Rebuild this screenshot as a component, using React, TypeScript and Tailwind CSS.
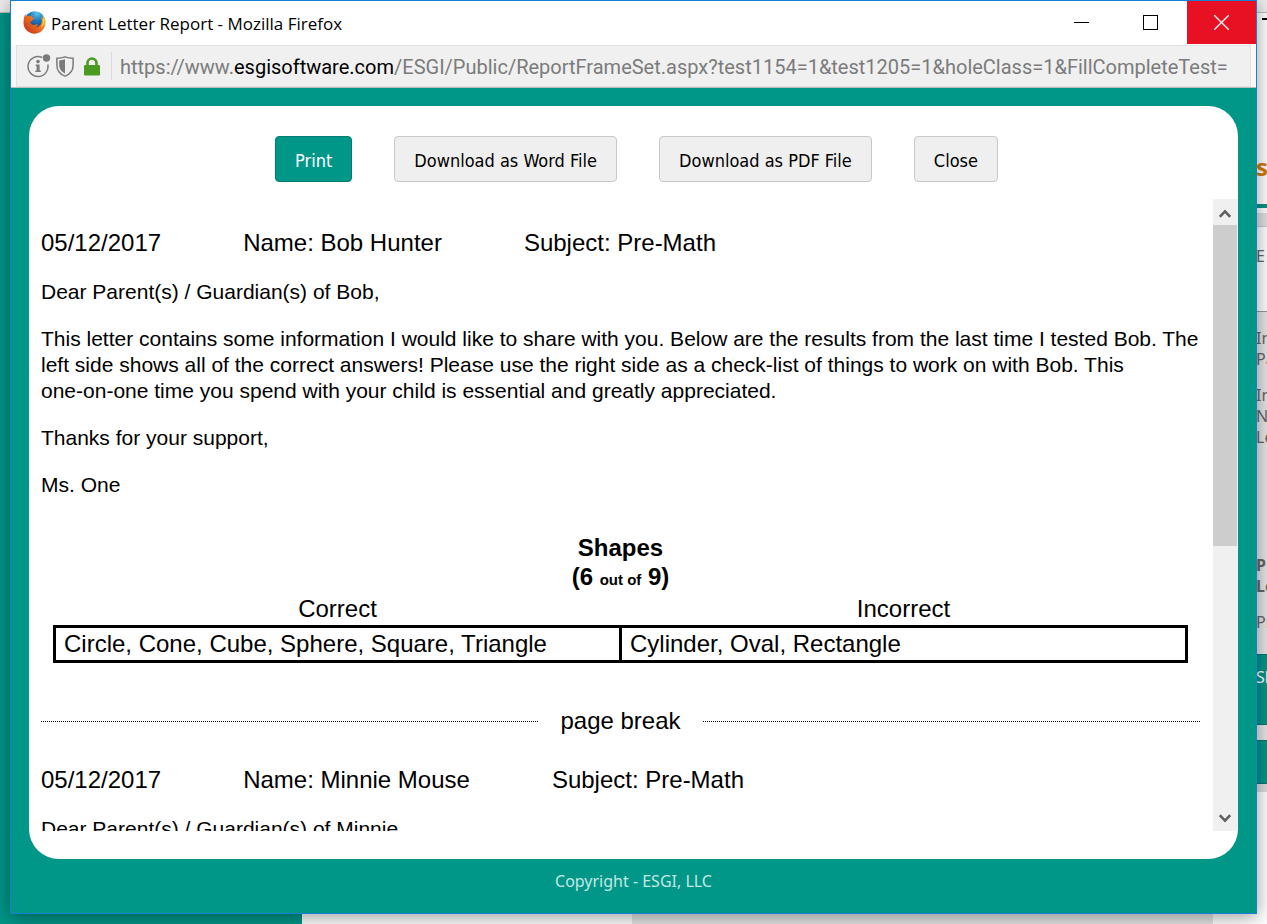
import { useRef } from "react";

function FirefoxLogo() {
  return (
    <svg className="size-[23px] shrink-0" viewBox="0 0 23 23" aria-hidden="true">
      <defs>
        <radialGradient id="globe" cx="0.6" cy="0.1" r="0.9">
          <stop offset="0" stopColor="#5cc4ee" />
          <stop offset="0.4" stopColor="#2078ba" />
          <stop offset="1" stopColor="#10256b" />
        </radialGradient>
        <linearGradient id="fox" x1="1" y1="0.1" x2="0.1" y2="0.9">
          <stop offset="0" stopColor="#ffdf3c" />
          <stop offset="0.4" stopColor="#f07a20" />
          <stop offset="1" stopColor="#c9341c" />
        </linearGradient>
      </defs>
      <circle cx="11.800" cy="10.600" r="10.400" fill="url(#globe)" />
      <path
        d="M2.200 3C2.400 3.900 2.800 4.500 3.400 5c1.500-.5 3-.3 4.100.4.700-.9 1.500-1.300 2.500-1.500-.9.8-1.300 1.700-1.200 2.500.8.300 1.900.2 2.700.4.100.8-.4 1.300-1.500 1.800-.6.300-.8.800-.8 1.700-.8-.2-1.500-.1-2.200.4.500 2.200 2.200 3.500 4.300 3.300 1.500-.2 2.200-1 3.300-.6.500.3.400.9-.1 1.300-1 .9-2 1.300-3.200 1.400 4 .8 7.400-2.100 7.600-6 .1-1.600-.2-3-.9-4.100 1 .6 1.600 1.400 2 2.400.1-2-.4-3.500-1.300-4.900 2.600 2.100 4 5 3.800 8.500-.4 6-5.100 10.700-11 10.700C5.500 22.500.6 18 .5 12 .4 8.700 1.200 5.500 2.200 3Z"
        fill="url(#fox)"
      />
      <path d="M20.600 5.500c1.300 4.200.6 9-3 11.700 2-3 2.800-7.200 3-11.700Z" fill="#ffd23c" />
    </svg>
  );
}

function InfoIcon() {
  return (
    <svg className="size-[24px] shrink-0" viewBox="0 0 24 24" aria-hidden="true">
      <path d="M15.200 3.500A10 10 0 1 0 20.800 10.500" fill="none" stroke="#7b7b7b" strokeWidth="1.500" />
      <circle cx="19.500" cy="4" r="3.700" fill="#7b7b7b" />
      <circle cx="11" cy="7.600" r="1.800" fill="#7b7b7b" />
      <path d="M8.700 10.500h3.900v6h1.200v1.500H8.400v-1.500h1.200V12H8.700Z" fill="#7b7b7b" />
    </svg>
  );
}

function ShieldIcon() {
  return (
    <svg className="h-[21px] w-[18px] shrink-0" viewBox="0 0 18 21" aria-hidden="true">
      <path
        d="M9 .9C6.500 1.900 3.500 2.300.9 2.300V9c0 5.500 3.500 9.500 8.100 11.100C13.600 18.500 17.100 14.500 17.100 9V2.300C14.500 2.300 11.500 1.900 9 .9Z"
        fill="none"
        stroke="#7b7b7b"
        strokeWidth="1.500"
      />
      <path d="M9 3.300C7 4 5 4.300 3.200 4.400V9c0 4 2.400 7 5.800 8.500Z" fill="#7b7b7b" />
    </svg>
  );
}

function LockIcon() {
  return (
    <svg className="h-[19px] w-[16px] shrink-0" viewBox="0 0 16 19" aria-hidden="true">
      <path d="M3.500 9V6a4.500 4.500 0 0 1 9 0v3" fill="none" stroke="#4b9b23" strokeWidth="2.600" />
      <rect x="0" y="8" width="16" height="10.500" rx="1.200" fill="#4b9b23" />
    </svg>
  );
}

function BackgroundPage() {
  return (
    <div className="flex h-full flex-col bg-[#f4f4f4]" aria-hidden="true">
      <div className="h-[13px] shrink-0 border-b border-[#bcbcbc] bg-[#ededed]" />
      <div className="flex min-h-0 flex-1">
        <div className="w-[302px] shrink-0 bg-[#009688]" />
        <div className="w-[330px] shrink-0 bg-white" />
        <div className="flex-1 bg-[#e4e4e4]" />
        <div className="w-[43px] shrink-0 bg-white" />
        <div className="flex w-[11px] shrink-0 flex-col overflow-hidden whitespace-nowrap bg-white font-['Noto_Sans',sans-serif] text-[16px] leading-[21px] text-[#666]">
          <div className="ml-[6px] mt-[5px] h-[2px] shrink-0 bg-black" />
          <div className="mt-[132px] h-[30px] text-[24px] font-bold leading-[30px] text-[#d97700]">s</div>
          <div className="mt-[22px] h-[4px] shrink-0 bg-[#009688]" />
          <div className="mt-[5px] h-[14px] shrink-0 border-b border-[#c4ccd4] bg-[#e0e0e0]" />
          <div className="h-[85px] shrink-0 border-b border-[#999] pt-[19px]">E</div>
          <div className="h-[342px] shrink-0 bg-[#e6e6e6] pt-[16px]">
            <div>In</div>
            <div>Pa</div>
            <div className="mt-[15px]">In</div>
            <div>N</div>
            <div>Le</div>
            <div className="mt-[107px] font-bold">P</div>
            <div className="font-bold">Le</div>
            <div className="mt-[15px]">Pr</div>
          </div>
          <div className="h-[71px] shrink-0 border-y border-[#00796b] bg-[#009688] pt-[12px] text-white">Sh</div>
          <div className="h-[15px] shrink-0 bg-[#e6e6e6]" />
          <div className="h-[44px] shrink-0 border-y border-[#00796b] bg-[#009688]" />
          <div className="h-[8px] shrink-0 bg-[#dcdcdc]" />
        </div>
      </div>
    </div>
  );
}

function TitleBar() {
  return (
    <header className="flex h-[44px] shrink-0 items-start bg-white">
      <div className="flex h-[43px] min-w-0 flex-1 items-center gap-[5px] pl-3 font-['Open_Sans',sans-serif] text-[17px] text-black">
        <FirefoxLogo />
        <span className="truncate pt-0.5">Parent Letter Report - Mozilla Firefox</span>
      </div>
      <button type="button" aria-label="Minimize" className="flex h-[43px] w-[69px] items-center justify-center">
        <svg className="size-[15px]" viewBox="0 0 15 15" shapeRendering="crispEdges"><path d="M0 7.500h15" stroke="#000" /></svg>
      </button>
      <button type="button" aria-label="Maximize" className="mr-0.5 flex h-[43px] w-[69px] items-center justify-center">
        <svg className="size-[15px]" viewBox="0 0 15 15" shapeRendering="crispEdges"><path d="M.5.5h14v14H.5Z" fill="none" stroke="#000" /></svg>
      </button>
      <button type="button" aria-label="Close window" className="flex h-[43px] w-[69px] items-center justify-center bg-[#e81123]">
        <svg className="size-[15px]" viewBox="0 0 15 15"><path d="M0 0l15 15M15 0L0 15" stroke="#fff" strokeWidth="1.300" /></svg>
      </button>
    </header>
  );
}

function AddressBar() {
  return (
    <div className="h-[43px] shrink-0 border-b border-[#bdbdbd] bg-[#f8f8f8] px-[5px]">
      <div className="flex h-[42px] items-center border border-[#e2e2e2] bg-[#f0f0f0] pl-[10px] pr-[7px]">
        <InfoIcon />
        <div className="ml-[5px] flex items-center gap-[10px]">
          <ShieldIcon />
          <LockIcon />
        </div>
        <div className="ml-[11px] h-7 w-px shrink-0 bg-[#d9d9d9]" />
        <div className="ml-2 min-w-0 flex-1 overflow-hidden whitespace-nowrap pt-0.5 font-['Roboto',sans-serif] text-[20px] leading-[30px] text-[#7b7b7b]">
          https://www.<span className="text-black">esgisoftware.com</span>/ESGI/Public/ReportFrameSet.aspx?test1154=1&amp;test1205=1&amp;holeClass=1&amp;FillCompleteTest=
        </div>
      </div>
    </div>
  );
}

const plainButton =
  "h-[46px] rounded border border-[#c8c8c8] bg-[#efefef] px-[19px] pt-[3px] text-black";

function Toolbar() {
  return (
    <div className="flex shrink-0 justify-center gap-[42px] pb-[17px] pl-1.5 pt-[30px] font-['DejaVu_Sans_Condensed','Noto_Sans',sans-serif] text-[18px]">
      <button type="button" className="h-[46px] rounded border border-[#007d71] bg-[#009688] px-[19px] pt-[3px] text-white">
        Print
      </button>
      <button type="button" className={plainButton}>Download as Word File</button>
      <button type="button" className={plainButton}>Download as PDF File</button>
      <button type="button" className={plainButton}>Close</button>
    </div>
  );
}

function LetterHeading({ date, name, subject }: { date: string; name: string; subject: string }) {
  return (
    <div className="flex gap-[82px] text-[24px] leading-[28px]">
      <span>{date}</span>
      <span>Name: {name}</span>
      <span>Subject: {subject}</span>
    </div>
  );
}

function Letter() {
  return (
    <article>
      <LetterHeading date="05/12/2017" name="Bob Hunter" subject="Pre-Math" />
      <div className="mt-[22px] flex flex-col gap-[21px]">
        <p>Dear Parent(s) / Guardian(s) of Bob,</p>
        <p>
          This letter contains some information I would like to share with you. Below are the results from the last
          time I tested Bob. The left side shows all of the correct answers! Please use the right side as a check-list
          of things to work on with Bob. This <span className="whitespace-nowrap">one-on-one</span> time you spend with
          your child is essential and greatly appreciated.
        </p>
        <p>Thanks for your support,</p>
        <p>Ms. One</p>
      </div>
      <div className="mt-[35px] px-3 text-[24px] leading-[29px]">
        <h2 className="text-center font-bold">
          Shapes
          <br />
          (6 <span className="text-[15px]">out of</span> 9)
        </h2>
        <table className="w-full table-fixed border-collapse">
          <thead>
            <tr className="h-[32px]">
              <th className="px-0 pb-0.5 pt-0 font-normal">Correct</th>
              <th className="px-0 pb-0.5 pt-0 font-normal">Incorrect</th>
            </tr>
          </thead>
          <tbody>
            <tr className="h-[35px]">
              <td className="border-[3px] border-black px-2 pb-px pt-0">Circle, Cone, Cube, Sphere, Square, Triangle</td>
              <td className="border-[3px] border-black px-2 pb-px pt-0">Cylinder, Oval, Rectangle</td>
            </tr>
          </tbody>
        </table>
      </div>
    </article>
  );
}

function PageBreak() {
  return (
    <div className="mb-[31px] mt-11 flex items-center gap-[22px] text-[24px] leading-[28px]">
      <div className="flex-1 border-t border-dotted border-black" />
      <span>page break</span>
      <div className="flex-1 border-t border-dotted border-black" />
    </div>
  );
}

function Chevron({ down = false }: { down?: boolean }) {
  return (
    <svg className="h-[9px] w-[12px]" viewBox="0 0 12 9" aria-hidden="true">
      <path d={down ? "M.8 1.200l5.200 5.500 5.200-5.500" : "M.8 7.800l5.200-5.500 5.200 5.500"} fill="none" stroke="#606060" strokeWidth="2.600" />
    </svg>
  );
}

function Report() {
  const area = useRef<HTMLDivElement>(null);
  const scroll = (top: number) => area.current?.scrollBy({ top });
  return (
    <div className="flex min-h-0 flex-1">
      <div
        ref={area}
        className="min-w-0 flex-1 overflow-y-auto pl-3 pr-[13px] pt-[30px] text-[21px] leading-[26px] text-black [scrollbar-width:none]"
      >
        <Letter />
        <PageBreak />
        <article>
          <LetterHeading date="05/12/2017" name="Minnie Mouse" subject="Pre-Math" />
          <p className="mt-[22px]">Dear Parent(s) / Guardian(s) of Minnie,</p>
        </article>
      </div>
      <div className="flex w-[25px] shrink-0 flex-col bg-[#f0f0f0] pr-px">
        <button type="button" aria-label="Scroll up" onClick={() => scroll(-60)} className="flex h-[26px] shrink-0 items-center justify-center pt-0.5">
          <Chevron />
        </button>
        <div className="flex min-h-0 flex-1 flex-col">
          <div className="h-[55.4%] bg-[#cdcdcd]" />
        </div>
        <button type="button" aria-label="Scroll down" onClick={() => scroll(60)} className="flex h-[26px] shrink-0 items-center justify-center">
          <Chevron down />
        </button>
      </div>
    </div>
  );
}

export default function App() {
  return (
    <div className="relative h-screen overflow-hidden font-['Liberation_Sans',Arial,sans-serif]">
      <BackgroundPage />
      <div className="absolute inset-x-[10px] bottom-[10px] top-0 flex flex-col border border-[#1a7fd4] bg-[#009688] shadow-[0_3px_18px_rgba(0,0,0,0.4)]">
        <TitleBar />
        <AddressBar />
        <main className="mx-[18px] mt-[18px] flex min-h-0 flex-1 flex-col overflow-hidden rounded-[30px] bg-white pb-7">
          <Toolbar />
          <Report />
        </main>
        <footer className="h-[54px] shrink-0 pt-[10px] text-center font-['Noto_Sans',sans-serif] text-[16px] leading-[24px] text-[#c5e8e4]">
          Copyright - ESGI, LLC
        </footer>
      </div>
    </div>
  );
}
